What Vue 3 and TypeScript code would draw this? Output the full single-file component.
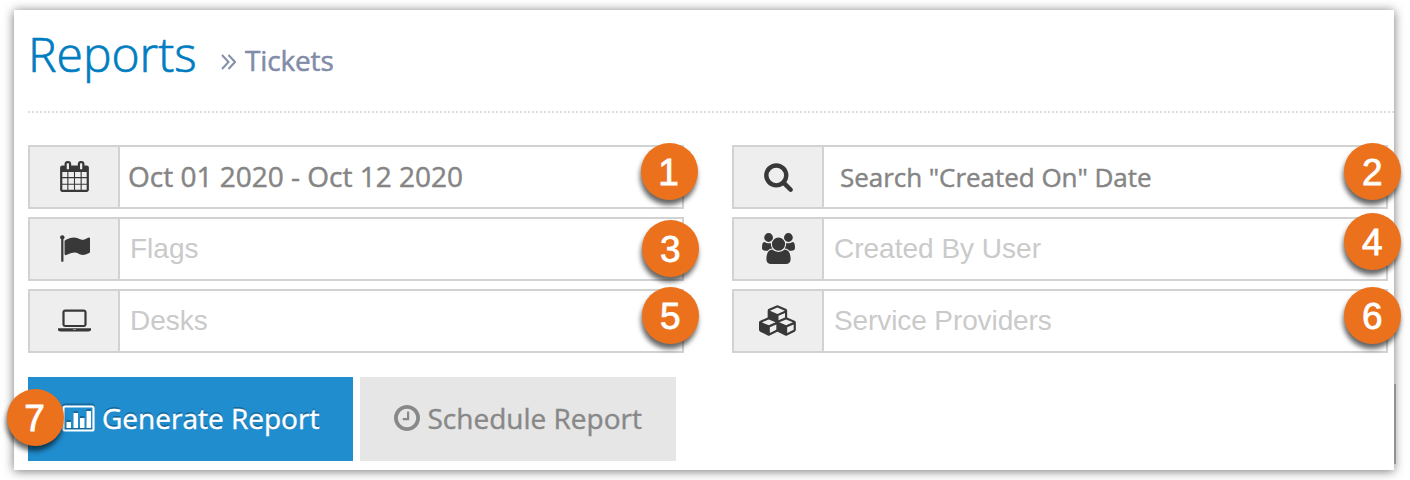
<script setup lang="ts">
interface Icon {
  width: number
  path: string
}

interface Field {
  id: string
  icon: Icon
  text: string
  kind: 'value' | 'search' | 'hint'
}

const icons: Record<string, Icon> = {
  calendar: {
    width: 1792,
    path: 'M192 1664h288v-288h-288v288zm352 0h320v-288h-320v288zm-352-352h288v-320h-288v320zm352 0h320v-320h-320v320zm-352-384h288v-288h-288v288zm736 736h320v-288h-320v288zm-384-736h320v-288h-320v288zm768 736h288v-288h-288v288zm-384-352h320v-320h-320v320zm-352-864v-288q0-13-9.5-22.5t-22.5-9.5h-64q-13 0-22.5 9.5t-9.5 22.5v288q0 13 9.5 22.5t22.5 9.5h64q13 0 22.5-9.5t9.5-22.5zm736 864h288v-320h-288v320zm-384-384h320v-288h-320v288zm384 0h288v-288h-288v288zm32-480v-288q0-13-9.5-22.5t-22.5-9.5h-64q-13 0-22.5 9.5t-9.5 22.5v288q0 13 9.5 22.5t22.5 9.5h64q13 0 22.5-9.5t9.5-22.5zm384-64v1280q0 52-38 90t-90 38h-1408q-52 0-90-38t-38-90v-1280q0-52 38-90t90-38h128v-96q0-66 47-113t113-47h64q66 0 113 47t47 113v96h384v-96q0-66 47-113t113-47h64q66 0 113 47t47 113v96h128q52 0 90 38t38 90z',
  },
  search: {
    width: 1792,
    path: 'M1216 832q0-185-131.5-316.5t-316.5-131.5-316.5 131.5-131.5 316.5 131.5 316.5 316.5 131.5 316.5-131.5 131.5-316.5zm512 832q0 52-38 90t-90 38q-54 0-90-38l-343-342q-179 124-399 124-143 0-273.5-55.5t-225-150-150-225-55.5-273.5 55.5-273.5 150-225 225-150 273.5-55.5 273.5 55.5 225 150 150 225 55.5 273.5q0 220-124 399l343 343q37 37 37 90z',
  },
  flag: {
    width: 1792,
    path: 'M320 256q0 72-64 110v1266q0 13-9.5 22.5t-22.5 9.5h-64q-13 0-22.5-9.5t-9.5-22.5v-1266q-64-38-64-110 0-53 37.5-90.5t90.5-37.5 90.5 37.5 37.5 90.5zm1472 64v763q0 25-12.5 38.5t-39.5 27.5q-215 116-369 116-61 0-123.5-22t-108.5-48-115.5-48-142.5-22q-192 0-464 146-17 9-33 9-26 0-45-19t-19-45v-742q0-32 31-55 21-14 79-43 236-120 421-120 107 0 200 29t219 88q38 19 88 19 54 0 117.5-21t110-47 88-47 54.5-21q26 0 45 19t19 45z',
  },
  users: {
    width: 1920,
    path: 'M593 896q-162 5-265 128h-134q-82 0-138-40.5t-56-118.5q0-353 124-353 6 0 43.5 21t97.5 42.5 119 21.5q67 0 133-23-5 37-5 66 0 139 81 256zm1071 637q0 120-73 189.5t-194 69.5h-874q-121 0-194-69.5t-73-189.5q0-53 3.5-103.5t14-109 26.5-108.5 43-97.5 62-81 85.5-53.5 111.5-20q10 0 43 21.5t73 48 107 48 135 21.5 135-21.5 107-48 73-48 43-21.5q61 0 111.5 20t85.5 53.5 62 81 43 97.5 26.5 108.5 14 109 3.5 103.5zm-1024-1277q0 106-75 181t-181 75-181-75-75-181 75-181 181-75 181 75 75 181zm704 384q0 159-112.5 271.5t-271.5 112.5-271.5-112.5-112.5-271.5 112.5-271.5 271.5-112.5 271.5 112.5 112.5 271.5zm576 225q0 78-56 118.5t-138 40.5h-134q-103-123-265-128 81-117 81-256 0-29-5-66 66 23 133 23 59 0 119-21.5t97.5-42.5 43.5-21q124 0 124 353zm-128-609q0 106-75 181t-181 75-181-75-75-181 75-181 181-75 181 75 75 181z',
  },
  laptop: {
    width: 1920,
    path: 'M416 1280q-66 0-113-47t-47-113v-704q0-66 47-113t113-47h1088q66 0 113 47t47 113v704q0 66-47 113t-113 47h-1088zm-32-864v704q0 13 9.5 22.5t22.5 9.5h1088q13 0 22.5-9.5t9.5-22.5v-704q0-13-9.5-22.5t-22.5-9.5h-1088q-13 0-22.5 9.5t-9.5 22.5zm1376 928h160v96q0 40-47 68t-113 28h-1600q-66 0-113-28t-47-68v-96h1760zm-720 96q16 0 16-16t-16-16h-160q-16 0-16 16t16 16h160z',
  },
  cubes: {
    width: 2304,
    path: 'M640 1632l384-192v-314l-384 164v342zm-64-454l404-173-404-173-404 173zm1088 454l384-192v-314l-384 164v342zm-64-454l404-173-404-173-404 173zm-448-293l384-165v-266l-384 164v267zm-64-379l441-189-441-189-441 189zm1088 518v416q0 36-19 67t-52 47l-448 224q-25 14-57 14t-57-14l-448-224q-4-2-7-4-2 2-7 4l-448 224q-25 14-57 14t-57-14l-448-224q-33-16-52-47t-19-67v-416q0-38 21.5-70t56.5-48l434-186v-400q0-38 21.5-70t56.5-48l448-192q23-10 50-10t50 10l448 192q35 16 56.5 48t21.5 70v400l434 186q36 16 57 48t21 70z',
  },
}

const fields: Field[] = [
  { id: 'range', icon: icons.calendar, text: 'Oct 01 2020 - Oct 12 2020', kind: 'value' },
  { id: 'date-type', icon: icons.search, text: 'Search "Created On" Date', kind: 'search' },
  { id: 'flags', icon: icons.flag, text: 'Flags', kind: 'hint' },
  { id: 'creator', icon: icons.users, text: 'Created By User', kind: 'hint' },
  { id: 'desks', icon: icons.laptop, text: 'Desks', kind: 'hint' },
  { id: 'providers', icon: icons.cubes, text: 'Service Providers', kind: 'hint' },
]

const callouts = [1, 2, 3, 4, 5, 6, 7]
</script>

<template>
  <div class="page">
    <div class="edge"></div>
    <main class="panel">
      <header class="head">
        <h1 class="title">Reports</h1>
        <svg class="chevrons" viewBox="0 0 15 16">
          <path d="M1 1l6.5 7L1 15M7.5 1L14 8l-6.500 7" />
        </svg>
        <span class="crumb">Tickets</span>
      </header>
      <div class="rule"></div>
      <section class="fields">
        <div v-for="f in fields" :key="f.id" class="field">
          <div class="addon">
            <svg
              class="glyph"
              :viewBox="`0 0 ${f.icon.width} 1792`"
              :class="{ wide: f.icon.width === 1920, widest: f.icon.width === 2304 }"
            >
              <path :d="f.icon.path" />
            </svg>
          </div>
          <div class="input" :class="[f.kind, f.id]"><span>{{ f.text }}</span></div>
        </div>
      </section>
      <div class="actions">
        <button class="btn primary" type="button">
          <svg class="chart" viewBox="0 0 33 29">
            <rect class="frame" x="1.500" y="2.500" width="30" height="24" rx="1.500" />
            <path d="M4.500 18h4.500v6H4.500zM11.500 9h4.500v15h-4.500zM18 14h4.500v10h-4.500zM24.500 7h4.500v17h-4.500z" />
          </svg>
          <span>Generate Report</span>
        </button>
        <button class="btn secondary" type="button">
          <svg class="clock" viewBox="128 128 1536 1536">
            <path
              d="M1024 544v448q0 14-9 23t-23 9h-320q-14 0-23-9t-9-23v-64q0-14 9-23t23-9h224v-352q0-14 9-23t23-9h64q14 0 23 9t9 23zm416 352q0-148-73-273t-198-198-273-73-273 73-198 198-73 273 73 273 198 198 273 73 273-73 198-198 73-273zm224 0q0 209-103 385.500t-279.500 279.500-385.500 103-385.500-103-279.500-279.500-103-385.500 103-385.500 279.500-279.500 385.500-103 385.500 103 279.500 279.500 103 385.500z"
            />
          </svg>
          <span>Schedule Report</span>
        </button>
      </div>
    </main>
    <div v-for="n in callouts" :key="n" class="callout" :class="`c${n}`">{{ n }}</div>
  </div>
</template>

<style>
body {
  margin: 0;
  background: #fff;
}
</style>

<style scoped>
.page {
  position: relative;
  box-sizing: border-box;
  width: 1410px;
  height: 480px;
  padding: 10px 16px 10px 14px;
  overflow: hidden;
  background: #fff;
  font-family: 'Open Sans', sans-serif;
}
.panel {
  box-sizing: border-box;
  width: 1380px;
  height: 460px;
  padding-left: 14px;
  background: #fff;
  box-shadow: 0 1px 10px rgba(0, 0, 0, 0.55);
}
.edge {
  position: absolute;
  left: 1394px;
  top: 384px;
  width: 2px;
  height: 80px;
  background: #929292;
  z-index: 1;
}
.head {
  display: flex;
  align-items: flex-start;
  height: 101px;
}
.title {
  margin: 10px 0 0;
  width: 193px;
  font-size: 48px;
  line-height: 68px;
  font-weight: 300;
  color: #007dc1;
  -webkit-text-stroke: 0.7px #007dc1;
}
.chevrons {
  width: 15px;
  height: 16px;
  margin: 44px 9px 0 0;
  fill: none;
  stroke: #8290ab;
  stroke-width: 2;
}
.crumb {
  margin-top: 30px;
  font-size: 28px;
  line-height: 40px;
  letter-spacing: -0.15px;
  color: #818ca8;
  -webkit-text-stroke: 0.5px #818ca8;
}
.rule {
  height: 2px;
  background: repeating-linear-gradient(90deg, #dedede 0 2px, #fff 2px 4px);
}
.fields {
  display: grid;
  grid-template-columns: 656px 656px;
  column-gap: 48px;
  row-gap: 8px;
  margin-top: 32px;
}
.field {
  display: flex;
  box-sizing: border-box;
  height: 64px;
  border: 2px solid #d2d2d2;
}
.addon {
  display: flex;
  align-items: center;
  justify-content: center;
  box-sizing: border-box;
  width: 90px;
  padding-bottom: 2px;
  border-right: 2px solid #d2d2d2;
  background: #eee;
}
.glyph {
  width: 31px;
  height: 31px;
  fill: #383838;
}
.glyph.wide {
  width: 33px;
}
.glyph.widest {
  width: 39px;
  height: 31px;
}
.input {
  display: flex;
  align-items: center;
  flex: 1;
  white-space: nowrap;
}
.value {
  padding: 0 0 2px 8px;
  font-size: 28px;
  color: #858585;
  -webkit-text-stroke: 0.45px #858585;
}
.search {
  padding-left: 16px;
  font-size: 26px;
  letter-spacing: -0.04px;
  color: #858585;
  -webkit-text-stroke: 0.45px #858585;
}
.hint {
  padding-left: 10px;
  font-family: 'Liberation Sans', Arial, sans-serif;
  font-size: 28px;
  color: #cacaca;
}
.hint.providers {
  letter-spacing: -0.1px;
}
.actions {
  display: flex;
  gap: 7px;
  margin-top: 24px;
}
.btn {
  display: flex;
  align-items: center;
  box-sizing: border-box;
  height: 84px;
  padding: 0 0 2px 34px;
  border: 0;
  font-family: inherit;
  font-size: 28px;
  white-space: nowrap;
}
.primary {
  width: 325px;
  background: #208dcf;
  color: #fff;
  text-shadow: 0 -2px 0 rgba(0, 0, 0, 0.25);
  -webkit-text-stroke: 0.4px #fff;
}
.secondary {
  width: 316px;
  background: #e6e6e6;
  color: #888;
  -webkit-text-stroke: 0.4px #888;
}
.chart {
  width: 33px;
  height: 29px;
  margin-right: 7px;
  fill: #fff;
  filter: drop-shadow(0 -2px 0 rgba(0, 0, 0, 0.25));
}
.chart .frame {
  fill: none;
  stroke: #fff;
  stroke-width: 2.2;
}
.clock {
  width: 26px;
  height: 26px;
  margin-right: 7.500px;
  fill: #888;
}
.callout {
  position: absolute;
  width: 57px;
  height: 57px;
  border-radius: 50%;
  background: #ec711d;
  box-shadow: -1px 5px 5px rgba(0, 0, 0, 0.6);
  font-family: 'Liberation Sans', Arial, sans-serif;
  font-size: 37px;
  line-height: 60px;
  text-align: center;
  text-indent: -1px;
  color: #fff;
  -webkit-text-stroke: 0.8px #fff;
  z-index: 2;
}
.c1 { left: 640.5px; top: 143.4px; }
.c2 { left: 1344.4px; top: 143.4px; }
.c3 { left: 642.4px; top: 220.4px; }
.c4 { left: 1344.4px; top: 213.4px; }
.c5 { left: 642.4px; top: 287.4px; }
.c6 { left: 1344.4px; top: 287.4px; }
.c7 { left: 6.500px; top: 389.4px; }
</style>
